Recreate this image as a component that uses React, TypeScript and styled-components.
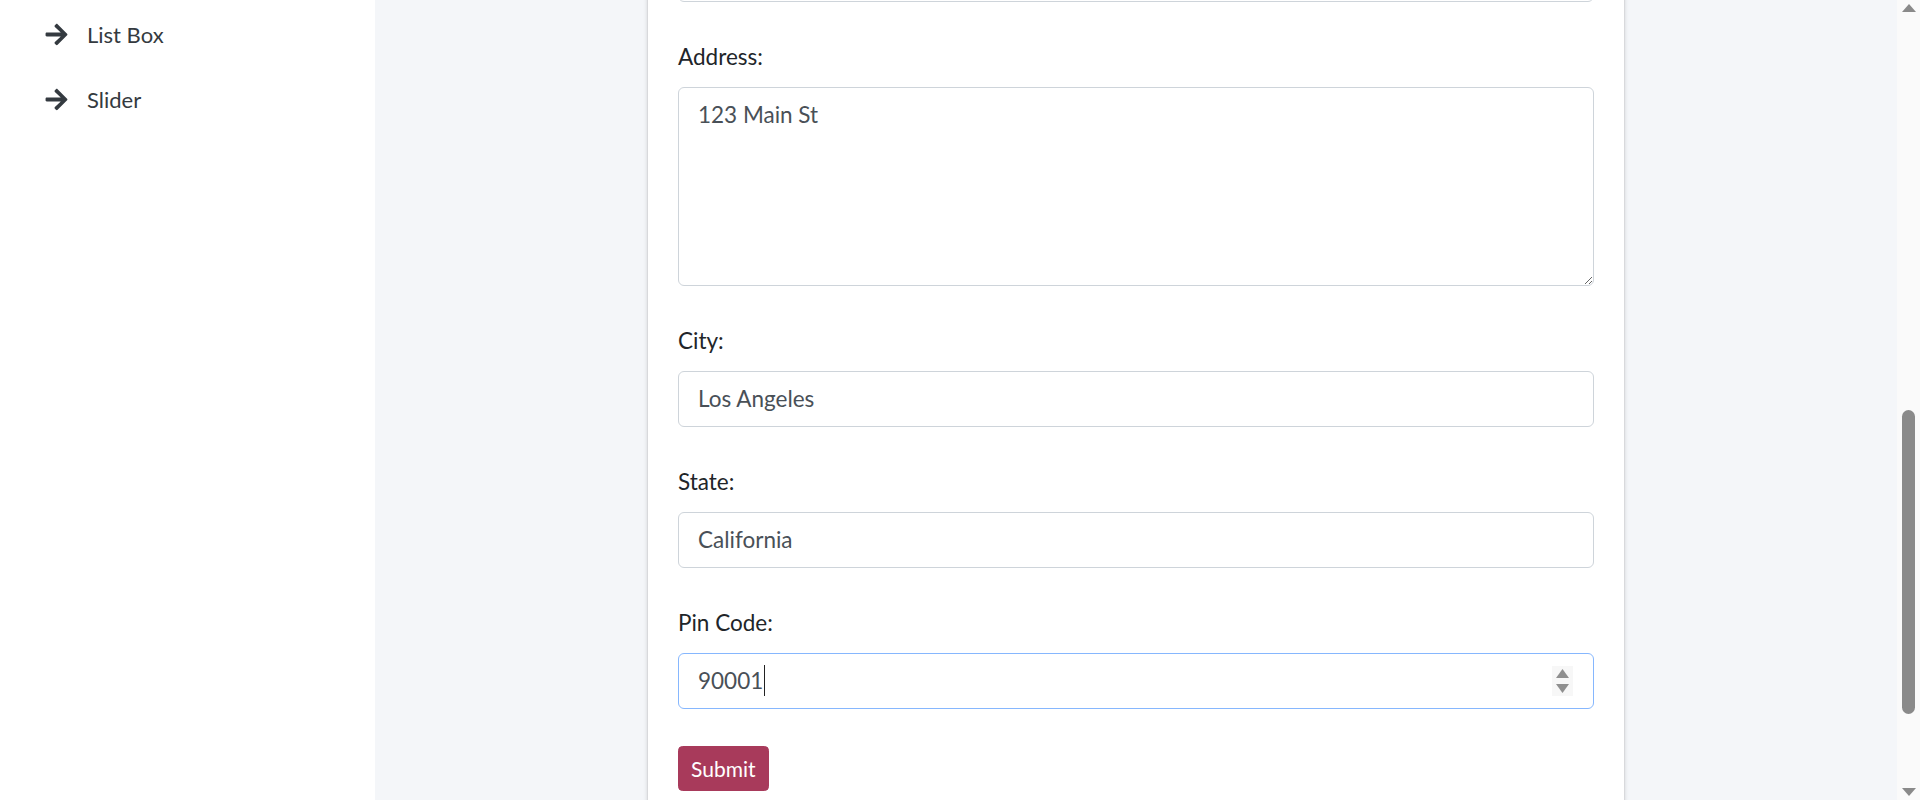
import React from "react";
import styled, { createGlobalStyle } from "styled-components";
import { FaArrowRight } from "react-icons/fa";

const GlobalStyle = createGlobalStyle`
  html, body { margin: 0; padding: 0; height: 100%; overflow: hidden; }
  body {
    font-family: "Lato", "Noto Sans", "Liberation Sans", sans-serif;
    background: #f4f6f9;
    color: #212529;
  }
  * { box-sizing: border-box; }
`;

const Shell = styled.div`
  display: flex;
  width: 1920px;
  height: 800px;
  overflow: hidden;
`;

const Sidebar = styled.aside`
  width: 375px;
  flex: 0 0 375px;
  background: #ffffff;
`;

const NavList = styled.ul`
  list-style: none;
  margin: 1.5px 0 0;
  padding: 0;
`;

const NavItem = styled.li`
  display: flex;
  align-items: center;
  gap: 18px;
  height: 65px;
  padding-left: 44px;
  color: #343a40;
  font-size: 22px;
  svg { flex: 0 0 auto; color: #343a40; }
`;

const Main = styled.main`
  flex: 1;
  display: flex;
  justify-content: center;
  background: #f4f6f9;
  overflow: hidden;
`;

const Card = styled.section`
  width: 976px;
  margin-top: -84.5px;
  align-self: flex-start;
  background: #ffffff;
  box-shadow: 0 0 1.5px rgba(0, 0, 0, 0.125), 0 1.5px 4.5px rgba(0, 0, 0, 0.2);
  padding: 30px 30px 40px;
`;

const Form = styled.form`
  display: flex;
  flex-direction: column;
  gap: 36.5px;
  align-items: stretch;
`;

const Field = styled.div`
  display: flex;
  flex-direction: column;
`;

const Label = styled.label`
  display: block;
  font-size: 22.5px;
  line-height: 36px;
  margin-bottom: 12px;
  color: #212529;
`;

const Input = styled.input`
  display: block;
  width: 100%;
  height: 56.5px;
  padding: 9px 19px;
  font-family: inherit;
  font-size: 22.5px;
  line-height: 36px;
  color: #495057;
  background: #fff;
  border: 1px solid #ced4da;
  border-radius: 6px;
  outline: none;
`;

const TextArea = styled.textarea`
  display: block;
  width: 100%;
  height: 199.5px;
  padding: 9px 19px;
  font-family: inherit;
  font-size: 22.5px;
  line-height: 36px;
  color: #495057;
  background: #fff;
  border: 1px solid #ced4da;
  border-radius: 6px;
  outline: none;
  resize: vertical;
`;

const FocusBox = styled.div`
  display: flex;
  align-items: center;
  height: 56.5px;
  padding: 0 19px;
  border: 1px solid #86b7fe;
  border-radius: 6px;
  background: #fff;
  font-size: 22.5px;
  color: #495057;
`;

const FocusText = styled.span`
  line-height: 36px;
`;

const Caret = styled.span`
  width: 1px;
  height: 31px;
  background: #222;
  margin-left: 1px;
`;

const Spin = styled.div`
  margin-left: auto;
  margin-right: 1px;
  width: 21px;
  height: 30px;
  background: #f7f7f7;
  display: flex;
  flex-direction: column;
  align-items: center;
  justify-content: space-between;
  padding: 3px 0;
`;

const SubmitButton = styled.button`
  align-self: flex-start;
  height: 45.5px;
  padding: 0 12px;
  font-family: inherit;
  font-size: 21px;
  line-height: 31.5px;
  color: #fff;
  background: #a83a5b;
  border: 1px solid #a83a5b;
  border-radius: 4.5px;
`;

const ScrollTrack = styled.div`
  width: 23px;
  flex: 0 0 23px;
  background: #fafafa;
  display: flex;
  flex-direction: column;
  align-items: center;
  padding: 4px 0 4px;
`;

const Thumb = styled.div`
  width: 13px;
  height: 304px;
  margin-top: 398px;
  border-radius: 7px;
  background: #8a8a8a;
`;

const DownArrow = styled.svg`
  margin-top: auto;
`;

const App: React.FC = () => (
  <>
    <GlobalStyle />
    <Shell>
      <Sidebar>
        <NavList>
          <NavItem>
            <FaArrowRight size={25} />
            <span>List Box</span>
          </NavItem>
          <NavItem>
            <FaArrowRight size={25} />
            <span>Slider</span>
          </NavItem>
        </NavList>
      </Sidebar>
      <Main>
        <Card>
          <Form onSubmit={(e) => e.preventDefault()}>
            <Field>
              <Input readOnly defaultValue="john@example.com" />
            </Field>
            <Field>
              <Label>Address:</Label>
              <TextArea readOnly defaultValue="123 Main St" />
            </Field>
            <Field>
              <Label>City:</Label>
              <Input readOnly defaultValue="Los Angeles" />
            </Field>
            <Field>
              <Label>State:</Label>
              <Input readOnly defaultValue="California" />
            </Field>
            <Field>
              <Label>Pin Code:</Label>
              <FocusBox>
                <FocusText>90001</FocusText>
                <Caret />
                <Spin>
                  <svg width="13" height="9" viewBox="0 0 13 9">
                    <path d="M6.5 0 L13 9 L0 9 Z" fill="#8f8f8f" />
                  </svg>
                  <svg width="13" height="9" viewBox="0 0 13 9">
                    <path d="M0 0 L13 0 L6.5 9 Z" fill="#8f8f8f" />
                  </svg>
                </Spin>
              </FocusBox>
            </Field>
            <SubmitButton type="submit">Submit</SubmitButton>
          </Form>
        </Card>
      </Main>
      <ScrollTrack>
        <svg width="14" height="8" viewBox="0 0 14 8">
          <path d="M7 0 L14 8 L0 8 Z" fill="#8a8a8a" />
        </svg>
        <Thumb />
        <DownArrow width="14" height="8" viewBox="0 0 14 8">
          <path d="M0 0 L14 0 L7 8 Z" fill="#8a8a8a" />
        </DownArrow>
      </ScrollTrack>
    </Shell>
  </>
);

export default App;
